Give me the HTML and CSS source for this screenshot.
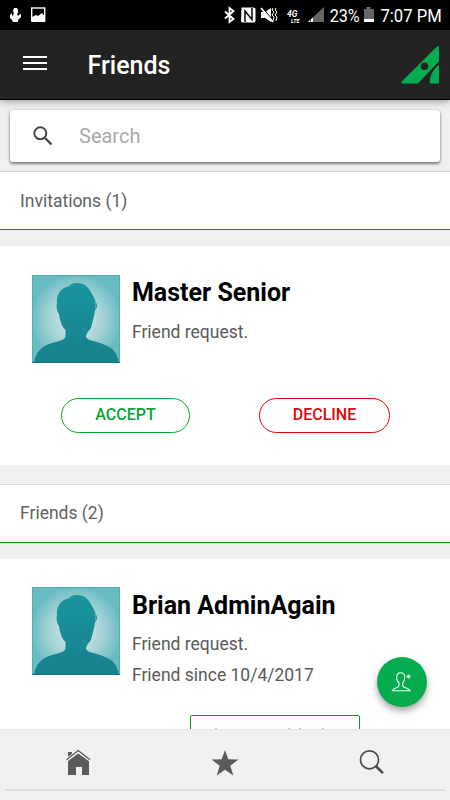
FILE: index.html
```html
<!DOCTYPE html>
<html lang="en">
<head>
<meta charset="utf-8">
<title>Friends</title>
<link rel="stylesheet" href="styles.css">
</head>
<body>
<svg class="defs" width="0" height="0" aria-hidden="true">
  <defs>
    <radialGradient id="glow" cx="50%" cy="50%" r="52%">
      <stop offset="0" stop-color="#e0eeee"/><stop offset=".55" stop-color="#a9d5d8"/><stop offset="1" stop-color="#68bbc1"/>
    </radialGradient>
    <linearGradient id="person" x1="0" y1="0" x2="0" y2="1">
      <stop offset="0" stop-color="#1a959f"/><stop offset="1" stop-color="#17818b"/>
    </linearGradient>
    <symbol id="avatar" viewBox="0 0 88 88">
      <rect width="88" height="88" fill="url(#glow)"/>
      <path d="M2 87C4 77 9 72 17 69C25 66 33 66 33.500 61V55C30 52 28 46 27 39C25 37 24 31 25 28C24 22 27 15 34 12C38 12 37 9 43 8C53 7 57 13 60 19C62 22 63 25 64 28C66 29 65 33 63 35C62 43 60 48 59 53C57 56 54 58 54 62C55 66 66 66 73 70C81 73 85 78 87 87Z" fill="url(#person)"/>
      <path d="M62 27l2 2-1 4" fill="none" stroke="#74bac0" stroke-width=".7"/>
      <path d="M.5 87V.5H87.5V87" fill="none" stroke="#4eafb4"/>
      <path d="M0 87.5H88" stroke="#16777f"/>
    </symbol>
  </defs>
</svg>
<div class="app">
  <div class="status">
    <svg class="status-left" width="48" height="30" viewBox="0 0 48 30">
      <path d="M15 8l2 0 1 2v3l-1 1 1 2 2-2h1v3l-3 3v2h-5l-1-2-2-2v-3l2-2v3l2-2-1-3 1-3z" fill="#fff"/>
      <rect x="31.700" y="8" width="13" height="13" fill="none" stroke="#fff" stroke-width="1.400"/>
      <path d="M32 17l4-2 2 1 4-3 3 4v5H32z" fill="#fff"/>
    </svg>
    <svg class="status-icons" width="108" height="30" viewBox="220 0 108 30">
      <path d="M225 11.500l8.500 7.500-4 3V8l4 3-8.500 7.500" fill="none" stroke="#fff" stroke-width="1.800"/>
      <path d="M241.500 7.500h12l2 1v12l-1 2h-12l-1.500-1z" fill="#fff"/>
      <path d="M245 22V11l7 8.500V8" fill="none" stroke="#000" stroke-width="1.500"/>
      <path d="M261 12h4l6-4v14l-6-4h-4z" fill="#fff"/>
      <path d="M262 7l12 15" stroke="#000" stroke-width="1.200"/>
      <path d="M261 8l12 14" stroke="#fff" stroke-width="1.800"/>
      <path d="M273 8l-1 2 2 2-2 3 2 2-1 4M276 8l-1 2 2 2-2 3 2 2-1 4" fill="none" stroke="#fff" stroke-width="1"/>
      <text class="lte-top" x="287" y="17">4G</text>
      <text class="lte-bottom" x="291" y="23">LTE</text>
      <path d="M308 22L324 7V22z" fill="#666"/>
      <path d="M308 22l6-5.500V22z" fill="#fff"/>
      <path d="M310.500 18v4M313.500 16v6" stroke="#000" stroke-width=".6"/>
    </svg>
    <span class="pct">23%</span>
    <svg class="battery" width="12" height="30" viewBox="0 0 12 30">
      <path d="M3.500 7h4v2H11v13H1V9h2.500z" fill="#666"/><path d="M1 19h10v3H1z" fill="#fff"/>
    </svg>
    <span class="time">7:07 PM</span>
  </div>
  <header class="header">
    <svg class="menu" width="24" height="16" viewBox="0 0 24 16"><path d="M0 2h24M0 8h24M0 14h24" stroke="#fff" stroke-width="2"/></svg>
    <h1>Friends</h1>
    <svg class="logo" width="40" height="40" viewBox="0 0 40 40">
      <path d="M38 2V16L17.500 37.500H2.200z" fill="#04ab51" stroke="#04ab51" stroke-width="2" stroke-linejoin="round"/>
      <path d="M38.200 21V37.700H30.500C30.500 31 33 26 38.200 21z" fill="#04ab51" stroke="#04ab51" stroke-width="1.600" stroke-linejoin="round"/>
      <path d="M39.500 17.500L29.500 28" stroke="#222" stroke-width="1.200"/>
      <circle cx="24.500" cy="21.200" r="3.800" fill="#222"/>
    </svg>
  </header>
  <main class="content">
    <div class="search">
      <svg width="20" height="20" viewBox="0 0 20 20"><circle cx="7.300" cy="7.300" r="6" fill="none" stroke="#424242" stroke-width="1.900"/><path d="M12 12l6.500 6.500" stroke="#424242" stroke-width="2.300"/></svg>
      <span>Search</span>
    </div>
    <h2 class="section">Invitations (1)</h2>
    <section class="card request">
      <div class="person">
        <svg class="avatar"><use href="#avatar"/></svg>
        <div class="info"><h3>Master Senior</h3><p>Friend request.</p></div>
      </div>
      <div class="actions">
        <button class="pill accept">ACCEPT</button>
        <button class="pill decline">DECLINE</button>
      </div>
    </section>
    <h2 class="section second">Friends (2)</h2>
    <section class="card friend">
      <div class="person">
        <svg class="avatar"><use href="#avatar"/></svg>
        <div class="info"><h3>Brian AdminAgain</h3><p>Friend request.</p><p>Friend since 10/4/2017</p></div>
      </div>
      <div class="outline"><svg width="168" height="13" viewBox="0 0 168 13"><path d="M24 12.500h2M97 12.500h2M108 12.500h2M131 12.500h2" stroke="#b5c8c1"/></svg></div>
    </section>
  </main>
  <nav class="tabs">
    <div class="tab"><svg width="26" height="28" viewBox="0 0 26 28"><path d="M3 3h4v3L3 10zM3 12L13.200 4.500 24 12V26h-7v-8h-6v8H3z" fill="#5b5b5b"/><path d="M2 10.500L13.200 1.800 25 11" fill="none" stroke="#f1f1f1" stroke-width="3"/><path d="M1.500 10.700L13.200 1.500 25 10.700" fill="none" stroke="#555" stroke-width="1.200"/></svg></div>
    <div class="tab"><svg width="28" height="28" viewBox="0 0 28 28"><path d="M14 1l3.300 9.300 10.200.2-8.200 6.200 3 9.700L14 20.700 5.700 26.400l3-9.700L.5 10.500l10.200-.2z" fill="#5b5b5b"/></svg></div>
    <div class="tab"><svg width="26" height="28" viewBox="0 0 26 28"><circle cx="10.500" cy="10.800" r="9" fill="none" stroke="#4c4c4c" stroke-width="1.700"/><path d="M16.500 16.800l7.500 7.300" stroke="#4c4c4c" stroke-width="2.700"/></svg></div>
  </nav>
  <div class="fab">
    <svg width="22" height="22" viewBox="0 0 22 22"><path d="M8 14.500V12C6 10 5.400 7.500 5.700 5.200C6 2.600 7.400 1.700 9.700 1.700s3.700.9 4 3.500c.3 2.300-.3 4.800-2 6.800v2.500c0 2.800 6.500 2.300 7.500 5.300H1.200c.8-3 6.800-2.500 6.800-5.300z" fill="none" stroke="#effff3" stroke-width="1.100"/><path d="M17.500 3.500v4M15.500 5.500h4" stroke="#d6f5df" stroke-width="1.800"/></svg>
  </div>
</div>
</body>
</html>
```
FILE: styles.css
```css
* { box-sizing: border-box; }
body { margin: 0; font-family: Roboto, "Liberation Sans", sans-serif; background: #f0f0f0; }
h1, h2, h3, p { margin: 0; }
.defs { position: absolute; }
.app { position: relative; width: 450px; height: 800px; overflow: hidden; display: flex; flex-direction: column; }
.status { height: 30px; flex: none; background: #000; display: flex; }
.status svg { flex: none; }
.status-left { margin-right: auto; }
.pct, .time { flex: none; font-size: 19px; line-height: 31px; color: #fff; white-space: nowrap; transform-origin: left center; }
.pct { width: 34px; padding-left: 2px; transform: scaleX(.85); }
.time { width: 73px; padding-left: 4px; transform: scaleX(.875); }
.status .lte-top { font: bold italic 8.5px Roboto, sans-serif; fill: #fff; }
.status .lte-bottom { font: bold italic 5.5px Roboto, sans-serif; fill: #fff; }
.battery { margin: 0 2px 0 1px; }
.header { height: 70px; flex: none; background: #222; border-bottom: 1px solid #000; display: flex; align-items: center; padding: 0 10px 0 23px; box-shadow: 0 1px 8px rgba(0,0,0,.4); position: relative; z-index: 2; }
.menu { margin-top: -3px; }
.header h1 { color: #fff; font-size: 25px; font-weight: 500; line-height: 36px; margin: 2px 0 0 40.5px; }
.logo { margin-left: auto; }
.content { flex: 1; min-height: 0; overflow: hidden; }
.search { height: 52px; margin: 10px 10px 9px; padding-left: 23px; display: flex; align-items: center; background: #fff; border-radius: 3px; box-shadow: 0 2px 3px rgba(0,0,0,.45), 0 0 3px rgba(0,0,0,.18); }
.search span { margin-left: 26px; font-size: 20px; color: #aaa; }
.section { height: 59px; padding: 0 20px; border-top: 1px solid #d7d7d7; border-bottom: 1px solid #0a960f; background: #fff; font-size: 17.5px; line-height: 58px; font-weight: 400; color: #626262; }
.section.second { line-height: 56px; }
.card { background: #fff; margin-top: 16px; padding-top: 29px; }
.request { height: 219px; margin-bottom: 19px; }
.person { display: flex; padding-left: 32.4px; gap: 11.6px; }
.avatar { width: 88px; height: 88px; flex: none; }
.info h3 { font-size: 25px; line-height: 30px; font-weight: 700; color: #000; margin-top: 3px; margin-bottom: 9px; white-space: nowrap; }
.info p { font-size: 17.5px; line-height: 31px; color: #5a5a5a; white-space: nowrap; }
.friend .person { margin-top: -1px; }
.friend .info h3 { margin-top: 4px; margin-bottom: 8px; }
.actions { display: flex; padding: 35px 60px 0 61px; justify-content: space-between; }
.pill { width: 129px; height: 35px; padding: 0 0 2px 0; border: 1px solid; border-radius: 18px; background: #fff; font: 500 16px Roboto, sans-serif; }
.accept { color: #07a637; }
.decline { color: #dc0909; width: 131px; }
.outline { width: 170px; height: 42px; border: 1px solid #0c9813; border-radius: 2px; margin: 24px 0 0 190px; }
.outline svg { display: block; }
.tabs { height: 71px; flex: none; display: flex; align-items: flex-start; padding: 0 5px; background: #f1f1f1; border-top: 1px solid #e6e6e6; }
.tab { flex: 1; height: 61px; display: flex; justify-content: center; align-items: flex-start; padding-top: 19px; border-bottom: 2px solid #dedede; }
.fab { position: absolute; left: 377px; top: 657px; width: 50px; height: 50px; border-radius: 50%; background: #05ac4e; display: flex; justify-content: center; align-items: center; box-shadow: 0 4px 7px rgba(0,0,0,.35); z-index: 3; }
```
